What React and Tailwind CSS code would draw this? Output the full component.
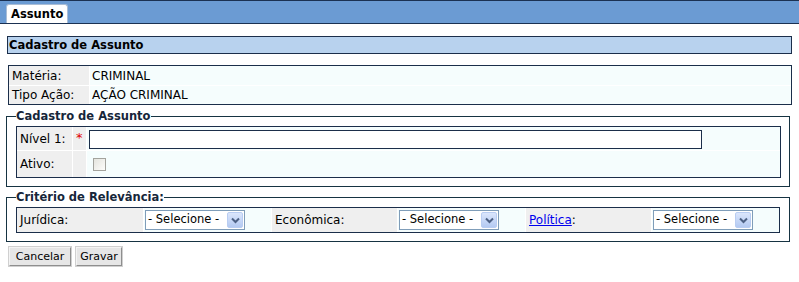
import React from "react";

const FONT = "font-['DejaVu_Sans',Verdana,sans-serif]";

const Select = () => (
  <div className="flex h-[20px] w-[100px] items-center justify-between border border-[#7f9db9] bg-white pl-[2px] pr-[1px]">
    <span className="text-[11.5px] leading-none text-black">- Selecione -</span>
    <span className="flex h-[16px] w-[16px] items-center justify-center rounded-[2px] border border-[#b9cdf2] bg-gradient-to-b from-[#dbe6fc] to-[#b4caf2]">
      <svg width="9" height="7" viewBox="0 0 9 7">
        <path d="M1 1.5 L4.5 5 L8 1.5" fill="none" stroke="#4d6185" strokeWidth="2" />
      </svg>
    </span>
  </div>
);

const Legend = ({ children }) => (
  <legend className="text-[11.5px] leading-[13px] font-bold text-[#16263a]">{children}</legend>
);

const Button = ({ children, width }) => (
  <button
    type="button"
    className={`h-[19px] ${width} border border-t-[#f4f4f4] border-l-[#f4f4f4] border-r-[#8e8e8e] border-b-[#8e8e8e] bg-[#e6e6e6] text-[11px] leading-none text-black outline outline-1 outline-[#d0d0d0]`}
  >
    {children}
  </button>
);

export default function App() {
  return (
    <div className={`h-[282px] w-[799px] bg-white text-[12px] text-black ${FONT}`}>
      {/* barra de abas */}
      <div className="h-[24px] border-y border-[#1b3152] bg-[#6b9bd3] pl-[6px] pt-[3px]">
        <div className="h-[19px] w-[62px] rounded-t-[3px] border border-b-0 border-[#a9bdd6] bg-white pl-[4px] text-[11.5px] leading-[18px] font-bold">
          Assunto
        </div>
      </div>

      {/* cabeçalho */}
      <div className="ml-[7px] mt-[12px] h-[18px] w-[785px] border border-[#1b2e4a] bg-[#b8d2ee] pl-[1px] text-[11.5px] leading-[16px] font-bold">
        Cadastro de Assunto
      </div>

      {/* dados */}
      <div className="ml-[8px] mt-[11px] grid w-[784px] grid-cols-[80px_1fr] grid-rows-[19px_18px] gap-px border border-[#1b2e4a] bg-white">
        <div className="flex items-center bg-[#efefef] pl-[3px]">Matéria:</div>
        <div className="flex items-center bg-[#f5fdfd] pl-[2px]">CRIMINAL</div>
        <div className="flex items-center bg-[#efefef] pl-[3px]">Tipo Ação:</div>
        <div className="flex items-center bg-[#f5fdfd] pl-[2px]">AÇÃO CRIMINAL</div>
      </div>

      {/* cadastro */}
      <fieldset className="ml-[6px] mt-[5px] w-[784px] border border-[#163342] pb-[8px] pl-[9px] pt-[3px]">
        <Legend>Cadastro de Assunto</Legend>
        <div className="grid w-[765px] grid-cols-[55px_13px_1fr] grid-rows-[23px_26px] gap-px border border-[#1b2e4a] bg-white">
          <div className="flex items-center bg-[#efefef] pl-[3px]">Nível 1:</div>
          <div className="bg-[#efefef] pl-[3px] pt-[4px] text-[13px] leading-none text-[#e00000]">*</div>
          <div className="bg-[#f5fdfd] pl-[2px] pt-[3px]">
            <input className="block h-[19px] w-[613px] border border-[#1b2e4a] bg-white outline-none" />
          </div>
          <div className="flex items-center bg-[#efefef] pl-[3px]">Ativo:</div>
          <div className="bg-[#efefef]" />
          <div className="bg-[#f5fdfd] pl-[6px] pt-[7px]">
            <div className="h-[13px] w-[13px] border border-[#a3a39d] bg-gradient-to-br from-[#e4e4de] to-[#fdfdfb]" />
          </div>
        </div>
      </fieldset>

      {/* relevância */}
      <fieldset className="ml-[6px] mt-[4px] w-[784px] border border-[#163342] pb-[8px] pl-[9px] pt-[3px]">
        <Legend>Critério de Relevância:</Legend>
        <div className="grid w-[764px] grid-cols-[126px_127px_125px_127px_125px_127px] grid-rows-[24px] gap-px border border-[#1b2e4a] bg-white">
          <div className="flex items-center bg-[#efefef] pl-[3px]">Jurídica:</div>
          <div className="flex items-center bg-[#f5fdfd] pl-[1px]">
            <Select />
          </div>
          <div className="flex items-center bg-[#efefef] pl-[3px]">Econômica:</div>
          <div className="flex items-center bg-[#f5fdfd] pl-[1px]">
            <Select />
          </div>
          <div className="flex items-center bg-[#efefef] pl-[3px]">
            <a href="#" className="text-[#0000ee] underline">Política</a>:
          </div>
          <div className="flex items-center bg-[#f5fdfd] pl-[1px]">
            <Select />
          </div>
        </div>
      </fieldset>

      <div className="ml-[9px] mt-[5px] flex gap-[5px]">
        <Button width="w-[62px]">Cancelar</Button>
        <Button width="w-[46px]">Gravar</Button>
      </div>
    </div>
  );
}
